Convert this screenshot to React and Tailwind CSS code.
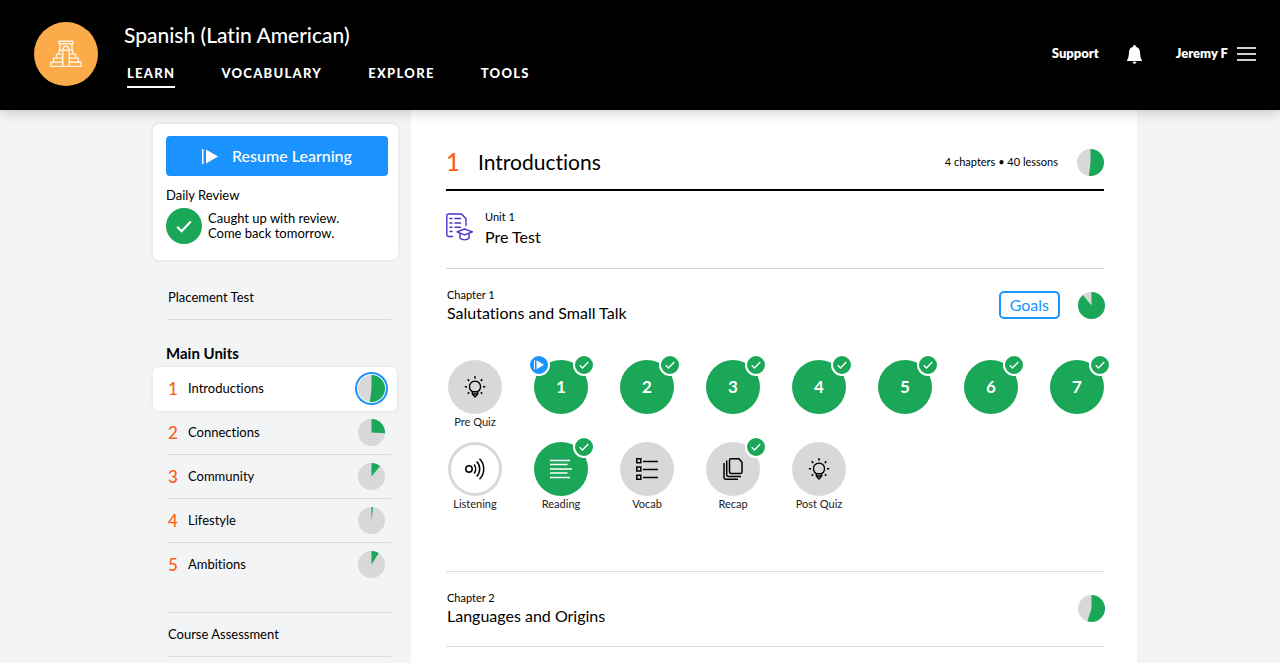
import React from 'react';

const units = [
  { number: 1, title: 'Introductions', progress: 52, active: true },
  { number: 2, title: 'Connections', progress: 26 },
  { number: 3, title: 'Community', progress: 11 },
  { number: 4, title: 'Lifestyle', progress: 2 },
  { number: 5, title: 'Ambitions', progress: 9 },
];

const lessons = [
  { label: 'Pre Quiz', icon: BulbIcon, tone: 'gray' },
  { number: 1, tone: 'green', done: true, current: true },
  { number: 2, tone: 'green', done: true },
  { number: 3, tone: 'green', done: true },
  { number: 4, tone: 'green', done: true },
  { number: 5, tone: 'green', done: true },
  { number: 6, tone: 'green', done: true },
  { number: 7, tone: 'green', done: true },
  { label: 'Listening', icon: ListeningIcon, tone: 'outline' },
  { label: 'Reading', icon: ReadingIcon, tone: 'green', done: true },
  { label: 'Vocab', icon: VocabIcon, tone: 'gray' },
  { label: 'Recap', icon: RecapIcon, tone: 'gray', done: true },
  { label: 'Post Quiz', icon: BulbIcon, tone: 'gray' },
];

const tones = {
  gray: 'bg-[#d8d8d8] text-black',
  green: 'bg-[#1aa757] text-white',
  outline: 'bg-white text-black inset-ring-3 inset-ring-[#d8d8d8]',
};

function Pie({ value }) {
  return (
    <svg viewBox="0 0 100 100" className="size-[27px] shrink-0" role="img" aria-label={`${value}% complete`}>
      <circle cx="50" cy="50" r="50" fill="#d8d8d8" />
      <circle
        cx="50"
        cy="50"
        r="25"
        fill="none"
        stroke="#1aa757"
        strokeWidth="50"
        pathLength="100"
        strokeDasharray={`${value} 100`}
        transform="rotate(-90 50 50)"
      />
    </svg>
  );
}

function PyramidIcon() {
  return (
    <svg viewBox="0 0 32 28" className="w-8" fill="none" stroke="#fff4e2" strokeWidth="1.4" strokeLinejoin="round">
      <path d="M9 1.2h14v2.6H9zM10 3.8v6.4M22 3.8v6.4" />
      <path d="M13.2 10.2V9a2.8 2.8 0 0 1 5.6 0v1.2" />
      <path d="M12.8 10.2H9.2v3.9H6.4v4H3.6v4.1H.8v4.2h30.4v-4.2h-2.8v-4.1h-2.8v-4h-2.8v-3.9h-3.6" />
      <path d="M12.8 10.2v16.2M19.2 10.2v16.2M12.8 10.2h6.4" />
      <path d="M9.2 14.1h3.6M6.4 18.1h6.4M3.6 22.2h9.2M19.2 14.1h3.6M19.2 18.1h6.4M19.2 22.2h9.2" />
    </svg>
  );
}

function BellIcon() {
  return (
    <svg viewBox="0 0 15 19" className="w-[15px]" fill="#fff">
      <path d="M7.5 0c.8 0 1.3.6 1.3 1.4v.4c2.6.6 4.1 2.6 4.2 5.2.2 3.9.5 6.3 2 8.3v.7H0v-.7c1.5-2 1.8-4.4 2-8.3.1-2.6 1.6-4.6 4.2-5.2v-.4C6.2.6 6.7 0 7.5 0z" />
      <path d="M5.5 16.8h4a2 1.9 0 0 1-4 0z" />
    </svg>
  );
}

function MenuIcon() {
  return (
    <svg viewBox="0 0 19 14" className="w-[19px]" stroke="#cfcfcf" strokeWidth="2">
      <path d="M0 1h19M0 7h19M0 13h19" />
    </svg>
  );
}

function PlayIcon({ className }) {
  return (
    <svg viewBox="0 0 16 15" className={className} fill="currentColor">
      <path d="M0 0h1.5v15H0zM4 .4 16 7.5 4 14.6z" />
    </svg>
  );
}

function CheckIcon({ className }) {
  return (
    <svg viewBox="0 0 16 13" className={className} fill="none" stroke="currentColor" strokeWidth="2.2">
      <path d="m1.2 6.8 4.4 4.4L14.8 1.5" />
    </svg>
  );
}

function PreTestIcon() {
  return (
    <svg viewBox="0 0 27 28" className="w-[27px] shrink-0" fill="none" stroke="#4434c4" strokeWidth="1.4" strokeLinejoin="round" strokeLinecap="round">
      <path d="M20 12.5V5.8L15.5 1h-13Q.8 1 .8 2.7v19.1q0 1.700 1.700 1.700h4" />
      <path d="M4 5.5h2M9 5.5h5.5M4 10h2M9 10h5.5M4 14.2h2M9 14.2h5.5M4 18.5h2" />
      <path d="m18.5 16 8 2.800-8 3-7.500-3z" />
      <path d="M14 20.5v4.700c2.500 2.200 6.500 2.200 9 0v-4.700" />
    </svg>
  );
}

function BulbIcon() {
  return (
    <svg viewBox="0 0 22 22" className="w-[22px]" fill="none" stroke="currentColor" strokeWidth="1.4">
      <path d="M8.5 15.7a5.600 5.600 0 1 1 5 0z" />
      <path d="M8.3 15.7v2.300L11 21l2.700-3v-2.300M8.300 18h5.400" />
      <path d="M11 .3v2.200M.8 10.700H3M19 10.700h2.200M3.700 3.400l1.500 1.500M18.300 3.400l-1.500 1.500M3.700 17.700l1.500-1.500M18.300 17.700l-1.500-1.500" strokeWidth="1.6" />
    </svg>
  );
}

function ListeningIcon() {
  return (
    <svg viewBox="0 0 22 22" className="w-[22px]" fill="none" stroke="currentColor" strokeWidth="1.5">
      <circle cx="5" cy="11" r="3.2" />
      <path d="M10 6.500c2.300 2.500 2.300 6.500 0 9M12.700 3.500c4 4 4 11 0 15M15.500.8c5.600 5.500 5.600 14.900 0 20.400" />
    </svg>
  );
}

function ReadingIcon() {
  return (
    <svg viewBox="0 0 22 20" className="w-[22px]" fill="none" stroke="currentColor" strokeWidth="1.5">
      <path d="M0 1.500h20M0 5.500h17.500M0 10h22M0 14h17.500M0 18.500h20" />
    </svg>
  );
}

function VocabIcon() {
  return (
    <svg viewBox="0 0 22 22" className="w-[22px]" fill="none" stroke="currentColor" strokeWidth="1.5">
      <path d="M.8.8h4v4h-4zM.8 9h4v4h-4zM.8 17.200h4v4h-4zM7 3.500h15M7 11.500h15M7 19.500h15" />
    </svg>
  );
}

function RecapIcon() {
  return (
    <svg viewBox="0 0 20 22" className="w-5" fill="none" stroke="currentColor" strokeWidth="1.5" strokeLinejoin="round">
      <path d="M7.900.8h8L19 4.300v9.800q0 1.400-1.400 1.400H7.900q-1.400 0-1.400-1.400V2.200Q6.500.8 7.900.8z" />
      <path d="M3.700 2.500v14.300q0 1.600 1.600 1.600H18M1 5v14.500q0 1.700 1.700 1.700H15" />
    </svg>
  );
}

function Header() {
  const tabs = ['Learn', 'Vocabulary', 'Explore', 'Tools'];
  return (
    <header className="relative z-10 flex h-[110px] items-center bg-black pr-6 pb-0.5 pl-[34px] text-white shadow-[0_2px_12px_rgba(0,0,0,0.2)]">
      <a href="#home" aria-label="Home" className="flex size-16 items-center justify-center rounded-full bg-[#fbab4a]">
        <PyramidIcon />
      </a>
      <div className="ml-[26px] flex flex-col">
        <h1 className="text-[21px] leading-7 font-medium">Spanish (Latin American)</h1>
        <nav className="mt-4 ml-[3px] flex gap-[46px] text-[13px] leading-4 font-black tracking-widest uppercase">
          {tabs.map((tab, i) => (
            <a
              key={tab}
              href={`#${tab.toLowerCase()}`}
              className={i === 0 ? 'border-b-2 border-white pb-[5px]' : 'border-b-2 border-transparent pb-[5px]'}
            >
              {tab}
            </a>
          ))}
        </nav>
      </div>
      <div className="ml-auto flex items-center text-[13px] font-extrabold">
        <a href="#support">Support</a>
        <button aria-label="Notifications" className="ml-7">
          <BellIcon />
        </button>
        <button className="ml-[34px] flex items-center gap-[9px]">
          Jeremy F
          <MenuIcon />
        </button>
      </div>
    </header>
  );
}

function Sidebar() {
  return (
    <aside className="w-[245px] shrink-0 pt-3.5 text-[13px]">
      <section className="rounded-md bg-white pt-3 pr-[10px] pb-4 pl-[13px] shadow-[0_0_4px_rgba(0,0,0,0.1)]">
        <button className="flex h-10 w-full items-center justify-center gap-3.5 rounded bg-[#1a93ff] text-base font-medium text-white">
          <PlayIcon className="w-4" />
          Resume Learning
        </button>
        <h2 className="mt-2.5 leading-[18px]">Daily Review</h2>
        <div className="mt-1 flex items-center gap-1.5">
          <span className="flex size-9 items-center justify-center rounded-full bg-[#1aa757] text-white">
            <CheckIcon className="w-4" />
          </span>
          <p className="leading-[15px]">
            Caught up with review.
            <br />
            Come back tomorrow.
          </p>
        </div>
      </section>

      <a href="#placement" className="mt-[15px] mr-[7px] ml-[15px] block border-b border-[#dadcde] leading-[44px]">
        Placement Test
      </a>

      <h2 className="mt-[23px] ml-[13px] text-[15px] leading-5 font-bold">Main Units</h2>
      <ul className="mt-1">
        {units.map((unit) => (
          <li
            key={unit.number}
            className={
              unit.active
                ? 'mr-px rounded-md bg-white pr-[7px] pl-[15px] shadow-[0_0_4px_rgba(0,0,0,0.08)]'
                : 'group pr-[7px] pl-[15px]'
            }
          >
            <a
              href={`#unit-${unit.number}`}
              className="flex h-11 items-center border-b border-transparent group-[:not(:last-child)]:border-[#dadcde]"
            >
              <span className="w-5 text-[17px] font-medium text-[#fb5d15]">{unit.number}</span>
              <span className="flex-1">{unit.title}</span>
              <span
                className={
                  unit.active
                    ? 'mr-0.5 flex size-[33px] items-center justify-center rounded-full ring-2 ring-[#1a93ff] ring-inset'
                    : 'mr-[6px] flex'
                }
              >
                <Pie value={unit.progress} />
              </span>
            </a>
          </li>
        ))}
      </ul>

      <a href="#assessment" className="mt-[25px] mr-[7px] ml-[15px] block border-y border-[#dadcde] leading-[43px]">
        Course Assessment
      </a>
    </aside>
  );
}

function Lesson({ lesson }) {
  const Icon = lesson.icon;
  return (
    <li className="flex flex-col items-center">
      <button
        aria-label={lesson.label || `Lesson ${lesson.number}`}
        className={`relative flex size-[54px] items-center justify-center rounded-full text-[17px] font-bold ${tones[lesson.tone]}`}
      >
        {Icon ? <Icon /> : lesson.number}
        {lesson.current && (
          <span className="absolute -top-1.5 -left-1.5 flex size-[22px] items-center justify-center rounded-full border-2 border-white bg-[#1a93ff] text-white">
            <PlayIcon className="w-2.5" />
          </span>
        )}
        {lesson.done && (
          <span className="absolute -top-1.5 -right-[7px] flex size-[22px] items-center justify-center rounded-full border-2 border-white bg-[#1aa757] text-white">
            <CheckIcon className="w-2.5" />
          </span>
        )}
      </button>
      <span className="h-4 text-[11px] leading-4 whitespace-nowrap text-[#222]">{lesson.label}</span>
    </li>
  );
}

function ChapterHeading({ label, title, children }) {
  return (
    <div className="-mr-px flex items-center pl-px">
      <div className="flex-1">
        <p className="text-[11px] leading-4">{label}</p>
        <h3 className="text-base leading-5">{title}</h3>
      </div>
      {children}
    </div>
  );
}

function MainPanel() {
  return (
    <main className="min-h-[553px] min-w-0 flex-1 bg-white pr-[33px] pl-[35px]">
      <div className="flex h-[81px] items-center border-b-2 border-black pt-[26px]">
        <span className="w-8 pb-0.5 text-2xl font-medium text-[#fb5d15]">1</span>
        <h2 className="flex-1 pb-0.5 text-[21px]">Introductions</h2>
        <span className="mr-[19px] text-[11px]">4 chapters • 40 lessons</span>
        <Pie value={52} />
      </div>

      <a href="#pretest" className="flex items-start gap-3 border-b border-[#d2d2d2] pt-[18px] pb-[21px]">
        <span className="pt-1">
          <PreTestIcon />
        </span>
        <span className="block">
          <span className="block text-[11px] leading-4">Unit 1</span>
          <span className="mt-0.5 block text-base leading-5">Pre Test</span>
        </span>
      </a>

      <section className="border-b border-[#dedede] pt-[18px] pb-[59px]">
        <ChapterHeading label="Chapter 1" title="Salutations and Small Talk">
          <button className="mr-[18px] h-7 rounded-[5px] border-2 border-[#1a93ff] px-[9px] text-base leading-none text-[#1a93ff]">
            Goals
          </button>
          <Pie value={89} />
        </ChapterHeading>
        <ul className="mt-[37px] ml-0.5 grid grid-cols-[repeat(auto-fill,54px)] gap-x-8 gap-y-3">
          {lessons.map((lesson) => (
            <Lesson key={lesson.label || lesson.number} lesson={lesson} />
          ))}
        </ul>
      </section>

      <section className="border-b border-[#dedede] pt-[18px] pb-5">
        <ChapterHeading label="Chapter 2" title="Languages and Origins">
          <Pie value={55} />
        </ChapterHeading>
      </section>
    </main>
  );
}

export default function App() {
  return (
    <div className="min-h-screen bg-[#f3f4f6] font-[Lato,sans-serif] text-black [font-variant-ligatures:none]">
      <Header />
      <div className="mx-auto flex max-w-[994px] gap-[13px] pl-2.5">
        <Sidebar />
        <MainPanel />
      </div>
    </div>
  );
}
